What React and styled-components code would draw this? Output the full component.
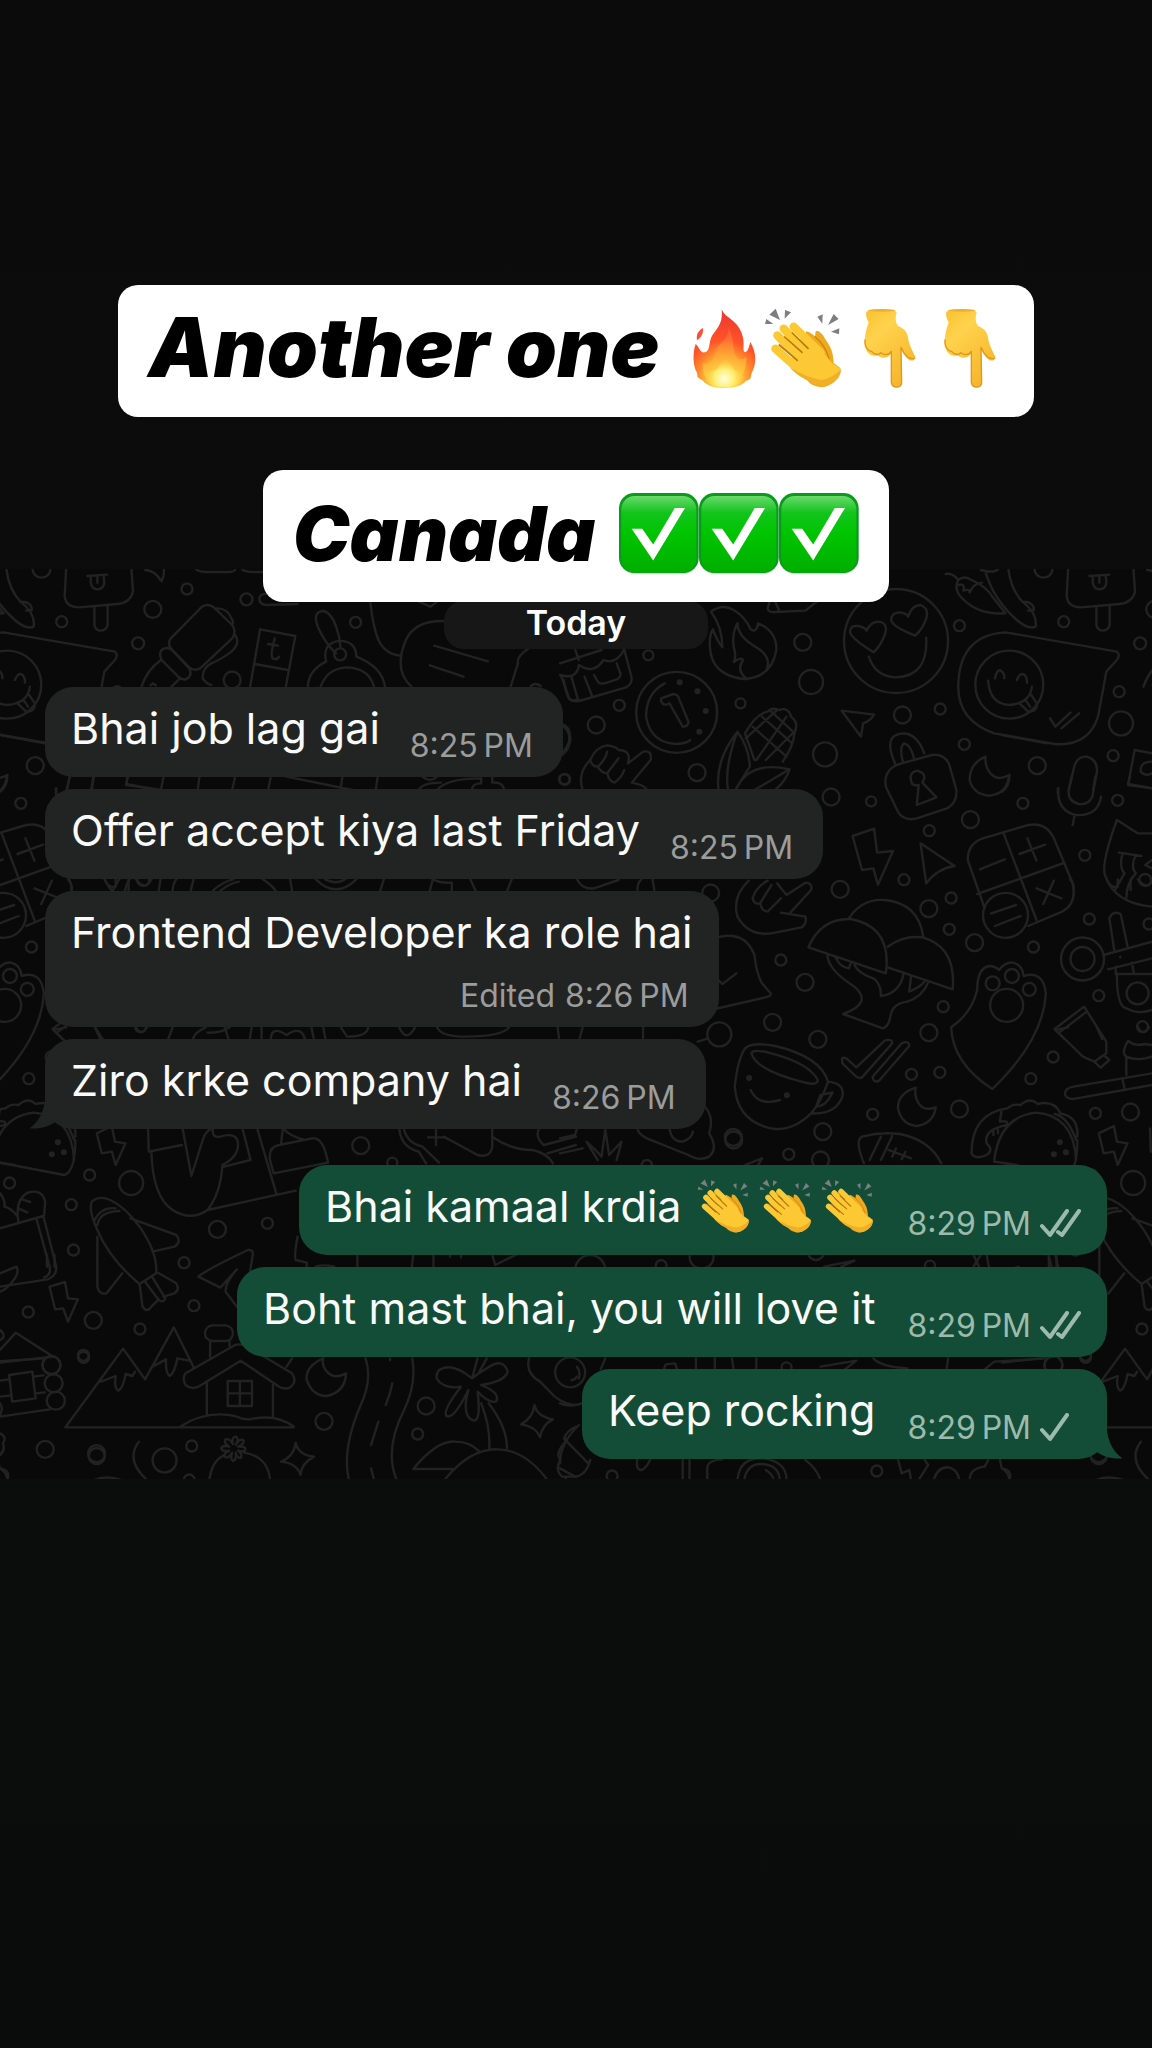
import React from "react";
import styled, { createGlobalStyle } from "styled-components";

const GlobalStyle = createGlobalStyle`
  * { box-sizing: border-box; }
  body { margin: 0; background: #0b0c0c; }
`;

const Page = styled.main`
  min-height: 100vh;
  padding-top: 285px;
  background: linear-gradient(#0b0b0b 0%, #0c0c0c 30%, #0b0d0c 75%, #0a0c0b 100%);
  font-family: Inter, "Liberation Sans", sans-serif;
`;

const Captions = styled.header`
  position: relative;
  z-index: 1;
  display: flex;
  flex-direction: column;
  align-items: center;
  gap: 53px;
`;

const Caption = styled.h1`
  display: flex;
  align-items: center;
  gap: 24px;
  height: 132px;
  margin: 0;
  padding: 0 30px 6px;
  border-radius: 20px;
  background: #fff;
  color: #000;
  font-family: Inter, Lato, sans-serif;
  font-size: ${(p) => p.$size}px;
  font-style: italic;
  font-weight: 900;
  line-height: 96px;
  white-space: nowrap;
`;

const EmojiRow = styled.span`
  display: inline-flex;
  gap: ${(p) => p.$gap || 0}px;
`;

const Emoji = styled.svg`
  display: block;
  width: ${(p) => p.$size}px;
  height: ${(p) => p.$size}px;
  overflow: visible;
`;

const Chat = styled.section`
  position: relative;
  margin-top: -33px;
  padding: 32px 45px 20px;
  overflow: hidden;
  background: #090909;
`;

const Wallpaper = styled.svg`
  position: absolute;
  inset: 0;
  width: 100%;
  height: 100%;
  fill: none;
  stroke: #222;
  stroke-width: 2.4;
  stroke-linecap: round;
  stroke-linejoin: round;
`;

const Day = styled.h2`
  position: relative;
  width: 264px;
  margin: 0 auto 38px;
  padding: 2px 0 6px;
  border-radius: 20px;
  background: #171717;
  color: #fff;
  font-size: 34px;
  line-height: 40px;
  font-weight: 600;
  text-align: center;
`;

const Messages = styled.ol`
  position: relative;
  display: flex;
  flex-direction: column;
  gap: 12px;
  margin: 0;
  padding: 0;
  list-style: none;
`;

const Bubble = styled.li`
  position: relative;
  display: flex;
  flex-direction: ${(p) => (p.$stacked ? "column" : "row")};
  align-self: ${(p) => (p.$out ? "flex-end" : "flex-start")};
  column-gap: ${(p) => (p.$out ? 32 : 30)}px;
  row-gap: 16px;
  min-height: 90px;
  margin-top: ${(p) => (p.$newGroup ? 24 : 0)}px;
  padding: 13px 26px 11px;
  border-radius: 28px;
  background: ${(p) => (p.$out ? "#144d37" : "#222423")};
  color: #fafafa;
`;

const Body = styled.span`
  display: flex;
  align-self: flex-start;
  align-items: center;
  gap: 16px;
  font-size: 43px;
  line-height: 56px;
  white-space: nowrap;
`;

const Meta = styled.span`
  display: flex;
  align-self: flex-end;
  align-items: center;
  gap: ${(p) => (p.$out ? 8 : 10)}px;
  padding-right: ${(p) => (p.$out ? 0 : 4)}px;
  color: ${(p) => (p.$out ? "#9dbbac" : "#9b9c9c")};
  font-size: 32px;
  line-height: 40px;
  white-space: nowrap;
`;

const Receipt = styled.svg`
  width: 42px;
  height: 30px;
  fill: none;
  stroke: currentColor;
  stroke-width: 4;
  stroke-linecap: round;
  stroke-linejoin: round;
`;

const Tail = styled.svg`
  position: absolute;
  bottom: 0;
  ${(p) => (p.$out ? "right: -16px;" : "left: -16px; transform: scaleX(-1);")}
  width: 30px;
  height: 40px;
  fill: ${(p) => (p.$out ? "#144d37" : "#222423")};
`;

function Fire({ size = 80 }) {
  return (
    <Emoji $size={size} viewBox="255 110 240 240" role="img" aria-label="fire">
      <defs>
        <radialGradient id="flame" gradientUnits="userSpaceOnUse" cx="376" cy="320" r="190">
          <stop offset="0" stopColor="#fff59d" />
          <stop offset="0.22" stopColor="#ffd23c" />
          <stop offset="0.42" stopColor="#ff8a2a" />
          <stop offset="0.6" stopColor="#ff5328" />
          <stop offset="1" stopColor="#ee3a30" />
        </radialGradient>
        <radialGradient id="ember" gradientUnits="userSpaceOnUse" cx="376" cy="322" r="62">
          <stop offset="0" stopColor="#fffde0" />
          <stop offset="0.45" stopColor="#fff176" />
          <stop offset="1" stopColor="#ffc53a" stopOpacity="0" />
        </radialGradient>
        <linearGradient id="core" gradientUnits="userSpaceOnUse" x1="376" y1="170" x2="376" y2="340">
          <stop offset="0" stopColor="#ff7a3c" stopOpacity="0.4" />
          <stop offset="0.5" stopColor="#ffab38" />
          <stop offset="1" stopColor="#ffe14a" />
        </linearGradient>
      </defs>
      <path d="M368 113C376 140 412 142 428 185C440 215 428 240 438 243C448 240 450 225 454 212C474 245 472 280 458 305L454 322L440 330C430 343 405 350 376 350C345 350 322 342 312 328L296 318L294 304C282 285 280 245 290 218C300 225 302 246 318 243C335 240 328 210 340 192C360 165 372 150 368 113Z" fill="url(#flame)" />
      <path d="M312 170C298 178 291 188 294 207C306 198 314 188 312 170Z" fill="#f4513c" />
      <path d="M388 168C408 205 398 235 412 258C420 268 436 262 442 256C442 300 425 335 376 346C325 338 308 312 312 274C330 282 346 270 348 245C352 215 392 208 388 168Z" fill="url(#core)" opacity="0.75" />
      <path d="M376 250C382 270 400 275 408 300C412 328 395 343 376 346C354 343 340 325 346 302C356 285 372 275 376 250Z" fill="url(#ember)" />
      <ellipse cx="376" cy="320" rx="58" ry="28" fill="url(#ember)" />
    </Emoji>
  );
}

function Clap({ size = 80 }) {
  return (
    <Emoji $size={size} viewBox="495 110 240 240" role="img" aria-label="clapping hands">
      <g fill="#7b7e82">
        <path d="M511 130L530 112L543 146ZM498 158L502 143L523 158ZM558 116L576 123L557 142ZM655 136L671 129L670 157ZM704 128L719 143L687 161ZM696 181L721 171L720 189Z" />
      </g>
      <path d="M622 180C636 184 642 190 648 196L650 180C660 174 672 190 680 205C696 228 702 240 704 275L724 290C728 310 700 346 668 348C650 346 630 338 625 325L600 250Z" fill="#efa91f" />
      <path d="M648 196C672 216 684 238 690 262" fill="none" stroke="#c98511" strokeWidth="4" strokeLinecap="round" />
      <g stroke="#fcc934" strokeWidth="25" strokeLinecap="round" fill="none">
        <path d="M584 166L665 245M554 172L645 270M535 192L630 290M529 232L610 304" />
      </g>
      <path d="M610 190L655 226C676 244 690 265 702 278C714 284 722 290 725 294C728 315 704 344 668 347C640 335 600 320 572 288L590 220Z" fill="#fcc934" />
      <path d="M725 294C728 315 704 344 668 347C635 334 600 318 574 290C610 310 640 322 668 326C690 322 712 310 725 294Z" fill="#e79f1e" opacity="0.6" />
      <g fill="none" stroke="#b9770e" strokeWidth="5" strokeLinecap="round">
        <path d="M580 185L627 231M557 197L609 243M541 221L595 267" />
      </g>
    </Emoji>
  );
}

function PointDown({ size = 80 }) {
  return (
    <Emoji $size={size} viewBox="735 110 240 240" role="img" aria-label="pointing down">
      <defs>
        <linearGradient id="skin" x1="0" y1="0" x2="0.6" y2="1">
          <stop offset="0" stopColor="#f9c12e" />
          <stop offset="0.35" stopColor="#ffd24d" />
          <stop offset="1" stopColor="#f7b52c" />
        </linearGradient>
      </defs>
      <path d="M802 122C812 111 880 110 893 122C888 142 890 153 897 164C916 172 924 182 927 198C930 222 940 238 948 254C952 268 936 272 926 262C915 250 907 240 906 228L908 334C906 352 880 352 877 334L876 248C866 262 848 262 838 253C820 256 804 248 801 232C793 222 797 206 798 196C800 180 804 166 809 154C802 140 800 132 802 122Z" fill="url(#skin)" />
      <path d="M798 205C796 225 806 240 818 240C824 250 838 252 846 244C858 254 872 250 877 240L877 334C880 352 906 352 908 334L906 228C915 250 930 268 948 260" fill="none" stroke="#de981c" strokeWidth="4" strokeLinejoin="round" />
      <ellipse cx="848" cy="117" rx="42" ry="4" fill="#eeb02a" />
    </Emoji>
  );
}

function CheckBox({ size = 80 }) {
  return (
    <Emoji $size={size} viewBox="58 665 241 241" role="img" aria-label="check mark">
      <defs>
        <linearGradient id="green" x1="0" y1="0" x2="0" y2="1">
          <stop offset="0" stopColor="#6bd96b" />
          <stop offset="0.22" stopColor="#12c41c" />
          <stop offset="0.5" stopColor="#00c400" />
          <stop offset="1" stopColor="#00ae00" />
        </linearGradient>
      </defs>
      <rect x="61" y="671" width="236" height="239" rx="46" fill="#000" opacity="0.16" />
      <rect x="58" y="665" width="240" height="241" rx="46" fill="#0b9a1e" />
      <rect x="65" y="674" width="226" height="230" rx="40" fill="url(#green)" />
      <path d="M96 773H128L161 820L226 710H257L161 868Z" fill="#fff" />
    </Emoji>
  );
}

/* Wallpaper tiles: each has its own origin and scale; rings are [cx, cy, radius]. */
const TILES = [
  {
    at: "translate(0 560) scale(.36735 .33333)",
    k: 0.36735,
    rings: [[113, 26, 9], [509, 87, 5.5], [671, 118, 6], [416, 148, 8.5], [168, 185, 5.5], [376, 250, 6], [968, 187, 5.5], [632, 360, 8.5], [1537, 658, 5.5], [926, 283, 6]],
    dots: [],
    d: `M180 28L176 110Q180 142 215 142L320 132Q355 128 362 95L358 28M238 48L292 44M247 50V68Q250 88 266 88Q284 86 284 66L282 46M265 52V68M257 142V195Q260 212 275 212Q290 210 293 195V138
    M395 30Q420 30 440 64Q448 45 446 28M535 30Q545 36 560 36H625Q638 34 640 30M660 30Q670 36 690 36H720M810 132L725 135Q705 133 706 115Q708 100 730 102
    M465 235L550 140Q568 128 585 145L632 195Q645 215 632 235L545 325Q530 335 515 322L465 265Q455 250 465 235ZM590 145Q620 145 630 175Q637 185 632 195M640 225Q655 250 630 275Q600 300 575 310Q550 325 552 355Q560 370 575 375M440 270Q455 258 468 270L515 325Q525 345 508 357Q495 362 485 350L440 300Q432 282 440 270ZM438 300Q400 330 385 380M490 355L467 380M410 376L416 370L424 376
    M708 208L804 228L778 380M708 208L681 380M694 312L784 330M748 235Q735 285 742 295Q752 302 760 290M730 252L757 257
    M915 280Q885 250 865 200Q850 155 880 153Q900 155 915 200Q925 230 927 262M888 305Q875 250 925 242Q970 245 970 290Q1040 320 1048 380M888 305Q840 330 838 380M873 380Q890 325 945 322Q1005 325 1018 380
    M1008 125Q1015 200 1030 240Q1050 285 1092 287M1210 183Q1130 180 1105 240Q1070 330 1120 380M1182 257L1328 304M1170 316L1262 350M1440 265Q1405 290 1410 310L1390 380M1140 125L1172 140L1190 125M1445 378Q1458 366 1472 378M1528 350L1550 415Q1560 425 1568 420
    M190 650L182 690M254 650L248 690M348 650L343 675L440 690M445 650L438 690M543 650L538 690M640 650L632 690M737 650L730 690M780 650L960 690M932 650L927 690M1028 650L1023 690M1140 690Q1150 668 1200 668M1150 650Q1170 670 1190 650M1190 690Q1215 655 1310 655V670Q1285 670 1285 690M1340 650V668Q1370 665 1372 690M1528 492Q1556 500 1552 545Q1545 580 1520 590
    M0 525L122 550M20 645Q20 680 0 695M152 685V700`,
  },
  {
    at: "translate(560 560) scale(.37755 .33333)",
    k: 0.37755,
    rings: [[643, 247, 8.5], [665, 366, 12], [234, 286, 5], [157, 436, 5.5], [96, 495, 8.5], [478, 430, 5], [907, 465, 8.5], [1007, 447, 5.5], [702, 583, 12], [363, 638, 8.5], [718, 711, 8.5], [824, 724, 5], [12, 658, 5], [1058, 197, 5.5], [1481, 395, 5.5], [1486, 490, 12], [1071, 553, 5.5], [1264, 617, 8.5], [1465, 587, 5.5], [1477, 721, 5.5], [1226, 730, 5.5], [1087, 779, 8.5], [978, 812, 5.5], [890, 243, 52], [309, 457, 40.5], [1190, 374, 34]],
    dots: [[317, 367], [364, 394], [386, 453], [369, 515]],
    d: `M831 277Q770 235 768 215Q768 195 790 198Q808 202 812 212Q825 180 850 186Q870 195 860 225Q850 255 831 277ZM941 227Q880 200 877 180Q878 155 905 158Q920 162 922 170Q932 135 955 135Q978 145 970 175Q962 205 941 227ZM818 290Q835 350 890 352Q975 350 970 233
    M400 155Q430 130 460 150Q490 170 505 208Q520 220 525 190Q575 215 573 270Q560 355 485 357Q400 345 397 260Q395 225 405 208Q415 240 430 262Q430 200 400 155ZM470 190Q455 220 460 260Q468 290 460 306Q480 290 485 300Q465 330 495 357M470 190Q470 230 520 262Q560 290 548 325
    M277 370Q228 400 228 470Q240 550 310 552Q335 550 345 540M268 415L300 402Q312 402 316 418L340 485Q340 500 325 500L290 430Q275 440 268 425Z
    M10 360Q15 400 25 418Q35 428 60 420L175 382Q195 370 188 345L170 268M30 350L48 420M65 350L85 408M90 345L100 365Q105 375 125 368L150 358Q165 350 158 335L150 310M0 345Q45 360 50 315Q90 345 115 300Q150 315 170 268M40 268L50 300M0 310L110 270M555 125L550 145Q552 158 570 156L650 152L680 125M570 125L580 150
    M490 520Q520 460 550 455Q560 440 580 450Q605 440 612 470Q635 490 620 520Q622 550 590 605M490 520L515 600M510 500L600 590M535 470L615 550M560 455L622 520M600 470L520 600M625 510L545 600M575 450L492 535
    M470 515Q410 600 420 690M470 515Q500 560 503 620Q480 660 465 690M470 515Q435 620 445 690M465 690Q500 600 608 628Q600 660 570 690M608 628L515 690
    M60 690Q45 640 80 600Q95 560 125 556Q150 560 155 570Q190 570 180 610L220 575Q245 570 240 600L190 668Q225 675 230 690M80 600Q85 620 100 620Q120 600 125 575M100 620Q110 640 125 640L155 595M125 640Q130 665 145 668Q165 650 170 630M0 490Q50 530 0 585
    M746 452L832 464Q820 485 803 490L797 530Z
    M888 612Q860 540 890 525Q940 505 965 580M908 605Q898 560 912 550Q930 555 938 597M905 610L985 585Q1015 580 1030 610L1050 690Q1052 730 1025 745L945 775Q910 785 895 755L863 680Q855 625 905 610ZM933 672Q920 640 945 632Q975 640 960 668L997 712L945 735L950 675Q940 678 933 672Z
    M1127 590Q1085 610 1085 660Q1095 705 1140 707Q1185 700 1190 645Q1160 665 1140 640Q1125 620 1127 590Z
    M1180 217L1475 275Q1485 285 1475 300L1447 335Q1435 410 1425 470Q1400 560 1310 552L1150 520Q1050 480 1055 370Q1060 225 1180 217ZM1152 355Q1158 325 1168 332Q1178 340 1177 355M1210 360Q1218 338 1228 343Q1237 350 1237 368M1134 362Q1138 432 1190 435Q1245 430 1250 380M1217 430L1240 455Q1265 455 1263 430L1248 405M1232 418L1245 440M1298 475L1312 500L1352 458M1328 505L1375 460
    M1362 620Q1370 588 1395 590Q1425 600 1422 635L1410 710Q1400 735 1375 732Q1345 725 1347 690ZM1320 685Q1315 750 1365 765Q1425 770 1433 710M1363 765L1358 795
    M1022 42Q1040 38 1055 60Q1070 45 1090 60Q1130 80 1145 110L1180 160M1055 60Q1040 90 1070 120Q1110 165 1180 160M1055 75Q1075 70 1068 92Q1085 85 1085 98Q1095 70 1118 68M1188 30Q1195 90 1225 125Q1265 160 1260 200Q1240 210 1210 180Q1150 120 1128 40M1225 125Q1255 125 1255 150L1240 152M1115 30Q1150 40 1160 28
    M1522 570L1568 580M1522 570L1505 672L1568 685M1568 605Q1535 605 1538 635Q1550 650 1568 640`,
  },
  {
    at: "translate(0 840) scale(.36735 .33333)",
    k: 0.36735,
    rings: [[982, 917, 8.5]],
    dots: [],
    d: `M185 118Q197 130 195 152M285 118Q295 145 315 140V118M350 118V150M370 118Q395 155 412 118M437 118L432 152M480 118Q470 133 470 152M527 118L519 152M580 152Q605 125 635 118M600 152Q625 130 650 125M715 118Q740 135 750 152M790 118L795 152M860 118Q915 178 970 118M885 118Q915 135 940 118M1045 118L1035 152M1170 152L1178 118Q1200 130 1230 128V152M1280 118L1295 152M1393 118L1381 152
    M180 562L145 570L170 597M258 562L273 597M370 562Q385 590 400 562M470 562L458 597M560 562Q530 577 525 597M565 578Q600 580 625 562M612 562L622 597M685 562L680 597M712 562V597M737 597Q740 555 780 585Q820 555 830 597M848 562L854 597M880 562L886 597M928 562L945 590Q1000 590 1002 562M1087 562Q1105 610 1130 562M1190 562Q1200 590 1270 590Q1370 588 1385 562M1518 562L1522 597
    M403 865L405 935L495 915M412 932Q415 1070 470 1110Q520 1145 565 1110Q600 1060 605 980M497 865L521 1008L552 900Q560 870 580 865Q575 895 600 890Q645 875 648 910Q650 950 605 975M660 865L682 960L610 980M700 865L752 1060M565 1110L805 1052M745 1000L735 960Q730 920 760 915L850 895Q880 890 893 968L745 1000M765 912L770 865Q790 890 830 900
    M1087 865Q1090 920 1140 935L1160 970M1100 870Q1110 910 1150 920L1195 968M1165 892H1208M1187 870V915M1208 890L1300 945Q1335 955 1340 920V865M1340 890Q1390 930 1450 930Q1490 940 1505 970M1468 865Q1455 890 1480 915L1568 890M1490 940L1568 915`,
  },
  {
    at: "translate(560 840) scale(.37755 .33333)",
    k: 0.37755,
    rings: [[399, 159, 8.5], [742, 148, 8.5], [911, 119, 5.5], [977, 206, 8.5], [1036, 174, 5.5], [1031, 268, 5.5], [1098, 308, 8.5], [1254, 321, 5.5], [1390, 46, 5.5], [1402, 237, 5.5], [1560, 252, 5.5], [585, 360, 5.5], [649, 427, 8.5], [563, 547, 8.5], [683, 598, 8.5], [422, 583, 12], [977, 578, 8.5], [1015, 500, 5.5], [931, 703, 5.5], [1006, 697, 5.5], [1306, 651, 5.5], [1247, 716, 5.5], [1058, 807, 8.5], [828, 823, 5.5], [696, 875, 8.5], [459, 892, 8.5], [606, 943, 5.5], [1418, 820, 5.5], [1511, 816, 8.5], [1427, 467, 5.5], [1543, 560, 5.5], [1180, 226, 22.5], [1146, 430, 7], [1197, 408, 7], [1243, 448, 6.5], [1183, 496, 16.5], [1384, 357, 21.5], [1384, 357, 12], [1530, 460, 11], [1550, 120, 6]],
    dots: [[501, 714], [601, 766], [1324, 907], [1340, 937], [1308, 943]],
    d: `M775 -12L832 -34L840 38L882 33L842 134L830 85L800 90ZM955 10L1045 78Q1000 85 970 130Z
    M1125 205L1080 60Q1080 10 1120 -5L1240 -45Q1290 -55 1310 0L1358 130Q1370 190 1330 215L1240 258M1175 -20L1262 240M1105 162L1337 68M1112 88L1178 58M1217 42L1285 14M1238 -5L1262 62M1262 145L1328 175M1308 122L1280 192M1142 220L1208 195M1152 258L1220 228
    M1568 -20H1530L1475 -60Q1430 80 1445 110Q1470 190 1568 200M1480 38L1540 48M1490 40Q1480 80 1495 100L1470 150M1525 45Q1510 80 1525 100Q1500 130 1500 175M1568 60L1550 75L1568 85
    M500 122Q455 170 470 230Q500 290 560 280L640 262Q655 250 650 230L585 218M610 218L665 150Q670 130 650 128L600 165L575 130M510 175Q515 195 530 190L560 135M530 190Q535 215 550 215L585 175M510 175Q520 140 550 122
    M658 322Q690 235 770 237Q880 260 863 400ZM765 235Q800 175 860 180Q950 190 962 290M868 320Q910 285 960 292Q1050 320 1040 448L868 382M708 345Q710 390 780 440Q830 490 750 522L855 565Q870 560 875 530Q880 490 920 485Q960 470 975 428M780 375Q790 400 830 415Q850 430 850 468Q900 460 910 402M730 352Q740 380 765 385L770 370M930 408L925 455Q955 440 965 425
    M415 292Q490 270 515 345Q520 400 535 430L558 460Q560 468 545 472L410 507M415 415L430 432L467 400
    M1145 747Q1040 670 1036 562Q1090 520 1105 450Q1105 380 1140 378Q1155 380 1163 390Q1180 365 1200 368Q1225 375 1228 408Q1280 390 1287 460Q1280 600 1145 747Z
    M1475 405Q1475 500 1500 505Q1530 525 1568 510M1440 345L1568 305M1452 388L1568 355M1468 330L1455 235Q1465 210 1485 222L1503 318M1475 402H1568M1472 380V402M1515 368L1520 400M1484 350V352
    M1310 567L1388 500L1447 605V640L1415 665L1385 650ZM1322 578L1395 515M1415 665L1432 683L1455 660L1440 645
    M1568 700L1360 740Q1335 745 1338 765Q1345 780 1365 776L1568 735M1490 718L1495 745M1500 705V650Q1485 640 1505 602Q1520 620 1550 612L1568 615M1500 650Q1530 665 1568 650
    M490 625Q510 605 570 618Q690 650 710 725Q755 730 748 770Q730 825 665 820Q620 870 570 867Q470 850 463 740Q470 660 490 625ZM507 640Q510 625 560 640Q660 670 683 720Q680 740 640 725Q520 690 507 640ZM505 750Q525 800 583 780M722 757L690 765L678 800Q705 800 722 757ZM710 725Q690 790 665 820
    M747 655Q755 650 765 662L785 682L860 602Q880 595 880 610L800 712Q790 718 780 705L748 670ZM828 710L905 610Q925 600 925 618L845 722Q830 730 828 710Z
    M942 743Q895 760 895 805Q905 855 945 858Q990 850 995 802Q965 815 950 790Q938 770 942 743Z
    M1150 960Q1165 830 1260 818Q1360 825 1367 960M1090 940Q1090 820 1185 805Q1200 790 1220 795Q1245 770 1265 792Q1310 780 1325 820Q1375 830 1370 890M1310 822Q1345 830 1367 900M1170 810L1165 845Q1190 840 1183 855Q1120 870 1130 910Q1150 930 1130 945Q1100 960 1090 940M1148 875V885M1160 870V880
    M805 970Q780 900 800 890Q850 875 900 882Q980 900 1010 970M850 890L820 960M880 888L850 960M870 930L930 955M890 925L880 950M915 935L905 958M1427 880L1467 858L1475 905L1503 910L1477 975L1467 935L1440 940Z
    M365 605L392 595M380 795Q410 830 395 880Q420 925 395 950Q370 965 340 945L230 895Q205 880 205 865M290 865Q295 905 325 905Q350 895 352 875M52 595L60 562M220 562V595M100 960L70 905Q95 930 110 950L120 868L130 945L163 905L150 960M0 940L60 925M45 865L40 885L0 895M45 118Q60 150 90 145L155 120M205 150Q205 130 215 118M245 118L250 150M412 378Q420 385 414 395`,
  },
  {
    at: "translate(0 1140) scale(.36735 .33333)",
    k: 0.36735,
    rings: [[357, 129, 12], [244, 105, 5.5], [194, 194, 5.5], [26, 129, 5.5], [592, 268, 8.5], [728, 250, 5.5], [200, 330, 5.5], [501, 368, 5.5], [528, 497, 5.5], [77, 516, 5.5], [254, 541, 8.5], [381, 567, 5.5], [227, 646, 5.5], [882, 844, 8.5], [1160, 798, 8.5], [1137, 882, 5.5], [123, 928, 8.5], [263, 941, 8.5], [448, 961, 12], [522, 918, 5.5], [140, 676, 9], [146, 730, 9], [152, 782, 9], [1552, 697, 15], [1068, 68, 5], [515, 1020, 5.5]],
    dots: [],
    d: `M0 68L175 105Q205 95 205 0M50 245Q40 180 75 158Q115 145 123 185L120 225M0 265L118 228L152 375Q158 405 130 418L0 440M100 240L135 380Q140 405 120 412M60 178L82 186M50 205L74 217M0 400L45 380Q55 400 30 430Q15 450 0 455M0 160Q15 180 12 200Q30 205 45 225
    M250 185Q270 165 300 180Q340 200 380 260Q430 340 425 400L380 432Q300 360 265 270Q240 210 250 185ZM265 255Q270 215 325 213M258 240Q275 200 315 205M355 235L480 285Q495 305 475 320L415 335M265 290V440Q270 465 290 460L333 400M380 432L388 500Q400 520 412 500L432 478M430 398L480 430Q490 450 475 460L445 470M395 425L432 480Q445 490 450 475L415 412
    M600 443L540 410Q560 390 675 330Q690 328 688 345L680 400M600 443L645 388Q612 430 614 455L645 500M135 440L177 426L185 475L212 478L185 545L172 505L150 508Z
    M0 630L43 578L145 650L0 668M0 570Q20 590 0 600M25 705L88 695L97 775L33 785ZM0 722L25 718M0 770L30 766M92 710L118 706M97 760L122 757M0 830L135 808M0 790Q10 805 0 825
    M527 682L473 562L395 718L335 626L178 862H800M275 725L315 708Q310 745 322 752Q335 745 342 702L360 708L368 695M415 680L452 658Q450 700 462 708Q475 700 483 655L515 662
    M505 700L640 615Q655 610 670 618L795 700Q810 725 790 742Q775 750 760 740L655 662L540 740Q520 750 505 735Q495 715 505 700ZM563 730V822M743 735V830M620 723H686V798H620ZM653 723V798M620 760H686M572 650V605M625 605V618M578 556H614Q634 560 634 580Q632 603 614 603H578Q558 600 558 580Q560 558 578 556ZM490 860Q560 810 640 828Q665 840 680 838Q750 820 800 860M780 680L795 655
    M880 655Q830 680 835 720Q850 768 890 768Q940 755 942 700Q910 720 890 695Q875 675 880 655M995 655Q1015 720 980 800Q930 930 950 1020M1122 655Q1135 730 1100 810Q1045 930 1080 1020M1068 730Q1062 765 1050 795M1030 845L1010 915M1010 985L1018 1018M1062 655V660
    M1285 715Q1230 665 1195 690Q1175 720 1215 738Q1235 745 1255 740Q1205 810 1215 828Q1235 840 1275 750Q1255 830 1290 842Q1310 840 1300 755Q1330 790 1350 785Q1365 760 1310 735Q1375 725 1382 695Q1370 650 1325 685Q1300 700 1285 715L1300 655M1325 655L1305 695M1310 790Q1335 860 1332 925M1330 790Q1380 860 1380 925M1210 1020Q1280 925 1355 928Q1430 930 1490 1020M1230 987H1125Q1190 900 1240 905Q1280 905 1305 935
    M1455 795Q1462 830 1505 838Q1475 855 1470 892Q1460 860 1418 853Q1450 835 1455 795ZM805 908Q812 945 855 950Q820 970 818 1005Q808 970 765 965Q800 950 805 908Z
    M570 1020Q575 965 610 945M665 938Q730 950 735 1020M634 912Q630 890 642 890Q652 896 642 914Q655 892 663 902Q665 912 648 920Q670 918 668 930Q662 938 648 932Q662 945 655 954Q644 954 642 938Q644 962 634 963Q626 956 632 938Q622 958 612 950Q608 940 624 932Q604 936 602 925Q606 914 624 920Q608 908 614 898Q624 894 634 912M378 905Q340 960 400 1020M255 1020Q290 1005 330 1020M0 880Q20 890 8 910Q15 930 0 945M0 985Q20 1000 20 1020
    M1440 655Q1430 700 1470 725L1510 770Q1540 795 1568 795M1568 860Q1530 880 1540 905Q1510 940 1525 960Q1510 990 1530 1010H1568M1540 1010V1020
    M810 290Q800 350 805 360L835 368V380M973 344V380M1125 344L1121 380M1180 344V380M1340 344L1348 375L1405 344M1225 346V350M1255 346V352M860 380Q880 372 910 380`,
  },
  {
    at: "translate(560 1140) scale(.37755 .33333)",
    k: 0.37755,
    rings: [[460, 0, 8.5], [690, 60, 8.5], [230, 75, 5], [80, 390, 15], [375, 350, 12], [268, 377, 5.5], [678, 336, 8], [980, 377, 5], [1427, 948, 8], [839, 993, 5.5], [138, 1008, 5.5], [600, 682, 5], [1307, 675, 9], [1392, 652, 5.5]],
    dots: [],
    d: `M490 75L535 55L525 75M1150 65L1210 75M700 380L780 362L745 380M1095 344L1110 380M1115 344L1095 380M1130 344L1136 380M1295 344V380M1315 344V380M108 688L120 655M275 688L280 673L305 670L310 688M360 655V688M410 655V688M455 655L460 688M520 655V688M690 680L785 662L755 688M830 655Q850 680 920 685M1028 655L1024 688M1125 688L1150 665L1290 655
    M45 680Q55 695 50 715M30 720Q40 720 44 710M0 790Q30 805 70 785M50 855Q0 910 0 970M0 985L40 1010Q70 1005 80 960M10 895L75 970M205 955Q200 990 215 990Q230 985 240 955M325 960V1020M343 960V1020M430 958Q390 960 390 985V1020M470 1020Q475 950 540 955Q600 965 600 1020M488 1020Q495 970 535 972Q580 975 582 1020M650 960Q680 985 690 1020M895 958L905 1000L925 990L930 1020M965 958L975 975L950 1020M990 1020Q1000 980 1030 982Q1055 990 1057 1020M1085 1020Q1085 985 1125 980L1135 958M1165 958L1170 985Q1200 990 1190 1020M545 990Q560 1000 565 1015`,
  },
];

function Doodles({ shift = 0 }) {
  return (
    <g transform={`translate(${shift} 0)`}>
      {TILES.map((t) => (
        <g key={t.at} transform={t.at}>
          <path d={t.d} vectorEffect="non-scaling-stroke" />
          {t.rings.map(([x, y, r], i) => (
            <ellipse key={i} cx={x} cy={y} rx={r / t.k} ry={r * 3} vectorEffect="non-scaling-stroke" />
          ))}
          {t.dots.map(([x, y], i) => (
            <ellipse key={i} cx={x} cy={y} rx="8" ry="9" fill="#222" stroke="none" />
          ))}
        </g>
      ))}
    </g>
  );
}

const MESSAGES = [
  { text: "Bhai job lag gai", time: "8:25\u2009PM" },
  { text: "Offer accept kiya last Friday", time: "8:25\u2009PM" },
  { text: "Frontend Developer ka role hai", time: "8:26\u2009PM", edited: true },
  { text: "Ziro krke company hai", time: "8:26\u2009PM", tail: true },
  { text: "Bhai kamaal krdia", time: "8:29\u2009PM", out: true, claps: 3, read: true, newGroup: true },
  { text: "Boht mast bhai, you will love it", time: "8:29\u2009PM", out: true, read: true },
  { text: "Keep rocking", time: "8:29\u2009PM", out: true, tail: true },
];

function Message({ text, time, out, edited, claps, read, tail, newGroup }) {
  return (
    <Bubble $out={out} $stacked={edited} $newGroup={newGroup}>
      {tail && (
        <Tail $out={out} viewBox="582 688 90 120" aria-hidden="true">
          <path d="M582 688H622C622 745 635 780 670 806C640 809 610 800 588 783Z" />
        </Tail>
      )}
      <Body>
        {text}
        {claps && (
          <EmojiRow $gap={8}>
            {Array.from({ length: claps }, (_, i) => <Clap key={i} size={54} />)}
          </EmojiRow>
        )}
      </Body>
      <Meta $out={out}>
        {edited && <span>Edited</span>}
        <time>{time}</time>
        {out && (
          <Receipt viewBox="0 0 42 30" role="img" aria-label={read ? "Delivered" : "Sent"}>
            <path d={read ? "M3 17L11 26L28 2M19 23L23 26L40 2" : "M3 17L11 26L28 2"} />
          </Receipt>
        )}
      </Meta>
    </Bubble>
  );
}

export default function App() {
  return (
    <>
      <GlobalStyle />
      <Page>
        <Captions>
          <Caption $size={82}>
            Another one
            <EmojiRow><Fire /><Clap /><PointDown /><PointDown /></EmojiRow>
          </Caption>
          <Caption as="p" $size={76}>
            Canada
            <EmojiRow><CheckBox /><CheckBox /><CheckBox /></EmojiRow>
          </Caption>
        </Captions>
        <Chat>
          <Wallpaper viewBox="0 569 1152 911" preserveAspectRatio="xMidYMin slice" aria-hidden="true">
            <Doodles />
            <Doodles shift={-1002} />
            <Doodles shift={1002} />
          </Wallpaper>
          <Day>Today</Day>
          <Messages>
            {MESSAGES.map((m) => <Message key={m.text} {...m} />)}
          </Messages>
        </Chat>
      </Page>
    </>
  );
}
